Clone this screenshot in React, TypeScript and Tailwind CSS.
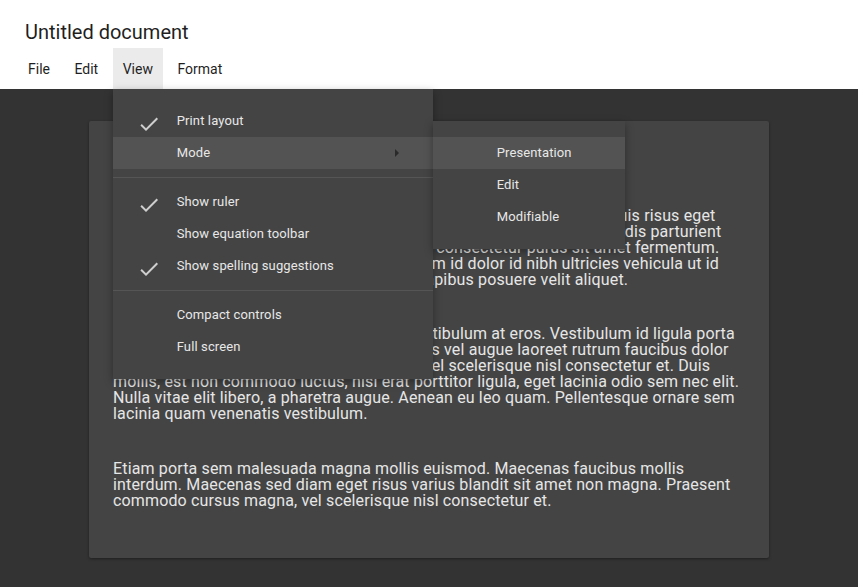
import React from "react";

const font = { fontFamily: "Roboto, 'Noto Sans', sans-serif" };

function Check() {
  return (
    <svg viewBox="0 0 24 24" className="h-6 w-6 fill-[#cfcfcf]">
      <path d="M9 16.17L4.83 12l-1.42 1.41L9 19 21 7l-1.41-1.41z" />
    </svg>
  );
}

function Item({
  label,
  checked,
  active,
  children,
}: {
  label: string;
  checked?: boolean;
  active?: boolean;
  children?: React.ReactNode;
}) {
  return (
    <div
      className={
        "relative flex h-8 items-center text-[13px] tracking-[0.12px] text-[#e8e8e8] " +
        (active ? "bg-[#535353]" : "")
      }
    >
      <div className="flex w-16 justify-center pl-[8px] pt-[5px]">
        {checked && <Check />}
      </div>
      <span className="flex-1">{label}</span>
      {children}
    </div>
  );
}

function Divider() {
  return <div className="my-2 h-px bg-[#555555]" />;
}

export default function App() {
  return (
    <div className="flex h-[587px] w-full flex-col overflow-hidden bg-[#333333]" style={font}>
      <header className="relative z-20 bg-white text-[#1f1f1f]">
        <div className="flex h-12 items-center pl-[25px] pt-[16px] text-[20px]">
          Untitled document
        </div>
        <nav className="flex h-[41px] gap-[4.5px] pl-[18px] text-[14px]">
          <div className="flex items-center px-[10px] pt-[2px]">File</div>
          <div className="flex items-center px-[10px] pt-[2px]">Edit</div>
          <div className="relative flex items-center bg-[#ebebeb] px-[10px] pt-[2px]">
            View
            <div className="absolute left-0 top-full w-[320px] bg-[#444444] py-4 shadow-[0_3px_8px_rgba(0,0,0,0.35)]">
              <Item label="Print layout" checked />
              <Item label="Mode" active>
                <div className="mr-[34px] h-0 w-0 border-y-[4px] border-l-[4px] border-y-transparent border-l-[#2a2a2a]" />
                <div className="absolute left-full top-[-16px] w-[192px] bg-[#444444] py-4 shadow-[0_3px_8px_rgba(0,0,0,0.35)]">
                  <Item label="Presentation" active />
                  <Item label="Edit" />
                  <Item label="Modifiable" />
                </div>
              </Item>
              <Divider />
              <Item label="Show ruler" checked />
              <Item label="Show equation toolbar" />
              <Item label="Show spelling suggestions" checked />
              <Divider />
              <Item label="Compact controls" />
              <Item label="Full screen" />
            </div>
          </div>
          <div className="flex items-center px-[10px] pt-[2px]">Format</div>
        </nav>
      </header>
      <main className="pl-[89px] pt-8">
        <div className="w-[680px] rounded-[2px] bg-[#444444] px-6 pb-[49px] pt-[87px] text-[16px] leading-4 tracking-[0.15px] text-[#e6e6e6] shadow-[0_1px_3px_rgba(0,0,0,0.4)]">
          <p>
            Sed posuere consectetur est at lobortis. Donec sed odio dui. Nullam quis risus eget urna
            mollis ornare vel eu leo. Cum sociis natoque penatibus et magnis dis parturient montes,
            nascetur ridiculus mus. Cras mattis consectetur purus sit amet fermentum. Cras justo
            odio, dapibus ac facilisis in. Nullam id dolor id nibh ultricies vehicula ut id elit.
            Integer posuere erat a ante venenatis dapibus posuere velit aliquet.
          </p>
          <p className="mt-[38px]">
            Morbi leo risus, porta ac consectetur ac, vestibulum at eros. Vestibulum id ligula porta
            felis euismod semper. Vivamus sagittis lacus vel augue laoreet rutrum faucibus dolor
            auctor. Praesent commodo cursus magna, vel scelerisque nisl consectetur et. Duis
            mollis, est non commodo luctus, nisi erat porttitor ligula, eget lacinia odio sem nec elit.
            Nulla vitae elit libero, a pharetra augue. Aenean eu leo quam. Pellentesque ornare sem
            lacinia quam venenatis vestibulum.
          </p>
          <p className="mt-[39px]">
            Etiam porta sem malesuada magna mollis euismod. Maecenas faucibus mollis interdum.
            Maecenas sed diam eget risus varius blandit sit amet non magna. Praesent commodo cursus
            magna, vel scelerisque nisl consectetur et.
          </p>
        </div>
      </main>
    </div>
  );
}
